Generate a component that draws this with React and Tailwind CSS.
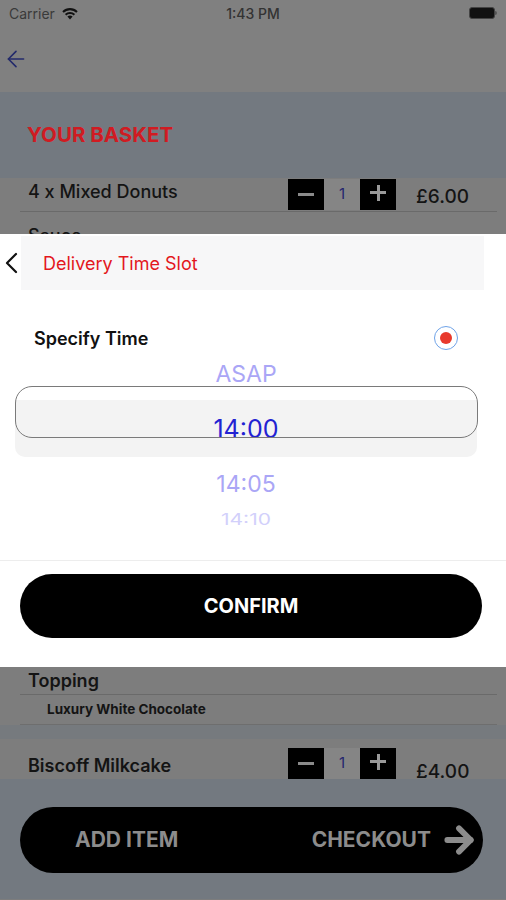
import React from "react";
import { ArrowLeft, ArrowRight } from "lucide-react";

const font = { fontFamily: "Inter, 'Noto Sans', sans-serif" };

const QtyControl = () => (
  <div className="flex h-[31px]">
    <div className="w-[36px] bg-black flex items-center justify-center">
      <div className="w-[16px] h-[3px] bg-[#8a8a8a]" />
    </div>
    <div className="w-[36px] bg-[#858585] flex items-center justify-center text-[15px] text-[#26266e]">1</div>
    <div className="w-[36px] bg-black flex items-center justify-center">
      <div className="relative w-[16px] h-[16px] -mt-[4px]">
        <div className="absolute left-0 top-[6.5px] w-[16px] h-[3px] bg-[#9a9a9a]" />
        <div className="absolute top-0 left-[6.5px] w-[3px] h-[16px] bg-[#9a9a9a]" />
      </div>
    </div>
  </div>
);

const WifiIcon = () => (
  <svg width="18" height="13" viewBox="0 0 18 13">
    <path d="M9 12.5 L6.4 9.6 A3.8 3.8 0 0 1 11.6 9.6 Z" fill="#111" />
    <path d="M3.9 7 A7.4 7.4 0 0 1 14.1 7 L12.7 8.5 A5.4 5.4 0 0 0 5.3 8.5 Z" fill="#111" />
    <path d="M1.3 4.2 A11 11 0 0 1 16.7 4.2 L15.3 5.7 A9 9 0 0 0 2.7 5.7 Z" fill="#111" />
  </svg>
);

const TimePicker = () => {
  return (
    <div className="relative h-[171px] overflow-hidden">
      {/* selection band + frame */}
      <div className="absolute left-[15px] w-[462px] top-[44px] h-[57px] bg-[#f3f3f3] rounded-b-[10px]" />
      <div className="relative ml-[15px] w-[462px] flex flex-col items-center">
        <div className="h-[36px] flex items-center text-[23px] text-[#aaa6f6]">ASAP</div>
        <div className="h-[74px] flex items-center text-[25px] text-[#2222d2] pt-[2px]">14:00</div>
        <div className="h-[36px] flex items-center text-[23px] text-[#aaa6f6]">14:05</div>
        <div className="h-[36px] flex items-center text-[21px] text-[#d2d0fb] scale-y-75">14:10</div>
      </div>
      <div className="absolute left-[15px] w-[463px] top-[30px] h-[52px] border border-[#7a7a7a] rounded-[17px]" />
    </div>
  );
};

const DeliveryModal = () => (
  <div className="absolute left-0 right-0 top-[234px] h-[433px] bg-white flex flex-col pt-[2px]">
    <div className="flex items-center h-[54px]">
      <div className="w-[21px] flex justify-center">
        <svg width="16" height="22" viewBox="0 0 16 22">
          <polyline points="13,2 4,11 13,20" fill="none" stroke="#111" strokeWidth="2.2" strokeLinecap="round" strokeLinejoin="round" />
        </svg>
      </div>
      <div className="w-[463px] h-full bg-[#f7f7f8] flex items-center pl-[22px] text-[18px] text-[#e3171d]">
        Delivery Time Slot
      </div>
    </div>
    <div className="mt-[30px] h-[36px] flex items-center justify-between pl-[34px] pr-[48px]">
      <span className="text-[18px] font-semibold text-[#111]">Specify Time</span>
      <div className="w-[24px] h-[24px] rounded-full border-[1.5px] border-[#6fa3e8] flex items-center justify-center">
        <div className="w-[12px] h-[12px] rounded-full bg-[#e8392c]" />
      </div>
    </div>
    <TimePicker />
    <div className="h-[33px]" />
    <div className="border-t border-[#ededed] pt-[13px] pb-[29px] px-[20px]">
      <button className="w-[462px] h-[64px] bg-black rounded-full text-white text-[20px] font-bold">
        CONFIRM
      </button>
    </div>
  </div>
);

export default function App() {
  return (
    <div className="relative w-[506px] h-[900px] overflow-hidden bg-[#7d7d7d]" style={font}>
      {/* status bar */}
      <div className="h-[26px] bg-[#808080] flex items-center justify-between px-[9px] text-[14px] text-[#2a2a2a]">
        <div className="flex items-center gap-[6px] w-[120px]">
          <span className="text-[#3a3a3a]">Carrier</span>
          <WifiIcon />
        </div>
        <span className="font-medium text-[#333]">1:43 PM</span>
        <div className="w-[120px] flex justify-end items-center">
          <div className="w-[26px] h-[12px] rounded-[3px] bg-[#111] border border-[#444]" />
          <div className="w-[2px] h-[4px] bg-[#555] rounded-r" />
        </div>
      </div>

      {/* nav */}
      <div className="h-[66px] bg-[#808080] flex items-center px-[3px]">
        <ArrowLeft size={26} strokeWidth={1.5} className="text-[#232a6b]" />
      </div>

      {/* header */}
      <div className="h-[86px] bg-[#737980] flex items-center pl-[27px]">
        <h1 className="text-[20.5px] font-bold text-[#d01b22]">YOUR BASKET</h1>
      </div>

      {/* item 1 */}
      <div className="bg-[#7d7d7d] pl-[20px] pr-[9px]">
        <div className="h-[34px] flex items-start border-b border-[#6a6a6a]">
          <span className="pl-[8px] pt-[0px] text-[18px] font-medium text-[#141414] flex-1">4 x Mixed Donuts</span>
          <div className="pt-[1px]">
            <QtyControl />
          </div>
          <span className="w-[101px] pl-[20px] pt-[5px] text-[19px] font-medium text-[#141414]">£6.00</span>
        </div>
        <div className="h-[455px] pl-[8px] pt-[10px] text-[18px] font-medium text-[#141414]">Sauce</div>
        <div className="h-[28px] flex items-center border-b border-[#6a6a6a] pl-[8px] text-[18px] font-semibold text-[#141414]">
          Topping
        </div>
        <div className="h-[30px] flex items-center border-b border-[#6e6e6e] pl-[27px] text-[13.5px] font-bold text-[#141414]">
          Luxury White Chocolate
        </div>
      </div>
      <div className="h-[14px] bg-[#767a7e]" />

      {/* item 2 */}
      <div className="h-[40px] bg-[#7d7d7d] pl-[20px] pr-[9px] flex items-start">
        <span className="pl-[8px] pt-[13px] text-[18px] font-semibold text-[#141414] flex-1">Biscoff Milkcake</span>
        <div className="pt-[9px]">
          <QtyControl />
        </div>
        <span className="w-[101px] pl-[20px] pt-[19px] text-[19px] font-medium text-[#141414]">£4.00</span>
      </div>

      {/* bottom bar */}
      <div className="h-[120px] bg-[#737980] px-[20px] pt-[28px]">
        <div className="h-[66px] w-[463px] bg-black rounded-full flex items-center pl-[55px] pr-[4px]">
          <span className="text-[21px] font-bold text-[#8c8c8c] flex-1">ADD ITEM</span>
          <span className="text-[21px] font-bold text-[#8c8c8c] mr-[8px]">CHECKOUT</span>
          <ArrowRight size={40} strokeWidth={3.5} className="text-[#8c8c8c]" />
        </div>
      </div>

      <DeliveryModal />
    </div>
  );
}
